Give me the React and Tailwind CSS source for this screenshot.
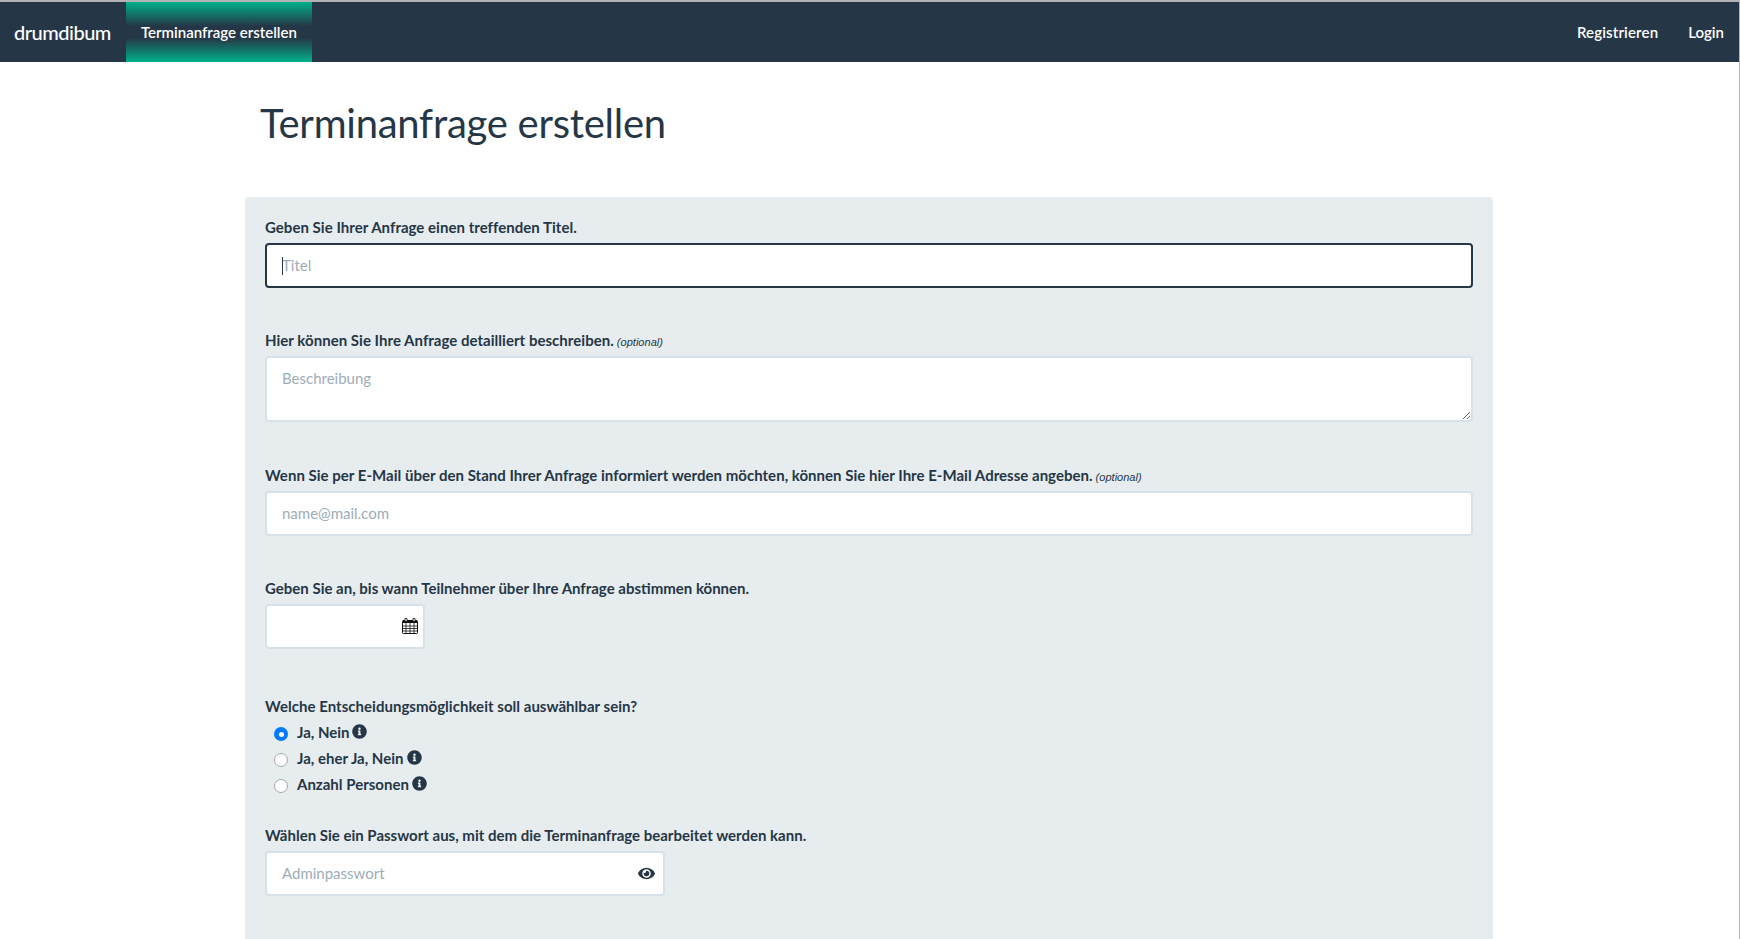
import { FaEye, FaInfoCircle } from "react-icons/fa";

const labelClass = "block text-[15px] font-bold leading-[22px] text-[#253746]";
const inputClass =
  "block h-[45px] w-full rounded-[4px] border-2 border-[#d7e1e9] bg-white px-[15px] pb-[2px] text-[15px] text-[#253746] outline-none placeholder:text-[#9dadb8]";

const decisions = [
  { label: "Ja, Nein", checked: true, gap: "ml-[2px]" },
  { label: "Ja, eher Ja, Nein", checked: false, gap: "ml-[4px]" },
  { label: "Anzahl Personen", checked: false, gap: "ml-[3px]" },
];

function Optional() {
  return <em className="ml-[3px] font-['Liberation_Sans',sans-serif] text-[11px] leading-none font-normal">(optional)</em>;
}

function CalendarIcon() {
  return (
    <svg viewBox="0 0 16 16" className="absolute top-[14px] right-[7px] size-[16px] text-[#111]" fill="none" stroke="currentColor">
      <rect x="0.5" y="2.5" width="15" height="13" rx="1" />
      <rect x="1" y="2" width="14" height="3" fill="currentColor" stroke="none" />
      <path d="M3 0.5h2v3h-2zM11 0.5h2v3h-2z" fill="white" strokeWidth="0.8" />
      <path d="M0.5 8h15M0.5 10.5h15M0.5 13h15M4 5v10M8 5v10M12 5v10" strokeWidth="0.8" />
    </svg>
  );
}

function Radio({ label, checked, gap }) {
  return (
    <label className="flex h-[26px] items-center pl-[9px] text-[15px] font-bold text-[#253746]">
      {checked ? (
        <span className="mt-[2px] flex size-[14px] items-center justify-center rounded-full bg-[#007bff]">
          <span className="size-[5px] rounded-full bg-white" />
        </span>
      ) : (
        <span className="mt-[2px] size-[14px] rounded-full border border-[#a5a9ad] bg-white" />
      )}
      <span className="ml-[9px] mb-[2px]">{label}</span>
      <FaInfoCircle className={`mb-[3px] size-[15px] ${gap}`} />
    </label>
  );
}

export default function App() {
  return (
    <div className="relative h-[939px] overflow-hidden border-t-2 border-r border-[#b4b4b4] bg-white font-['Lato',sans-serif] text-[#253746]">
      <nav className="flex h-[60px] items-center bg-[#253746] text-white">
        <a className="w-[126px] pl-[14px] text-[20px] font-medium tracking-[-0.5px]">drumdibum</a>
        <a className="flex h-full w-[186px] items-center bg-[linear-gradient(to_bottom,#00b08c,#253746_40%,#253746_60%,#00b08c)] px-[15px] text-[15px] font-semibold">
          Terminanfrage erstellen
        </a>
        <div className="ml-auto flex items-center gap-[30px] pr-[15px] text-[15px] font-semibold">
          <a className="tracking-[0.15px]">Registrieren</a>
          <a>Login</a>
        </div>
      </nav>

      <main className="ml-[245px] w-[1248px]">
        <h1 className="pt-[37px] pb-[50px] pl-[15px] text-[40px] leading-[48px] font-normal tracking-[-0.25px]">Terminanfrage erstellen</h1>

        <form className="rounded-[4px] bg-[#e7ecef] px-5 pt-[19px] pb-24">
          <label className={`${labelClass} tracking-[0.03px]`}>Geben Sie Ihrer Anfrage einen treffenden Titel.</label>
          <div className="relative mt-[5px]">
            <input placeholder="Titel" className={`${inputClass} !border-[#253746]`} />
            <span className="absolute top-[14px] left-[17px] h-[18px] w-px bg-[#253746]" />
          </div>

          <label className={`${labelClass} mt-[41px] tracking-[0.03px]`}>
            Hier können Sie Ihre Anfrage detailliert beschreiben.<Optional />
          </label>
          <textarea
            placeholder="Beschreibung"
            className={`${inputClass} mt-[5px] !h-[66px] pt-[9px]`}
          />

          <label className={`${labelClass} mt-[42px] tracking-[0.02px]`}>
            Wenn Sie per E-Mail über den Stand Ihrer Anfrage informiert werden möchten, können Sie hier Ihre E-Mail Adresse angeben.<Optional />
          </label>
          <input placeholder="name@mail.com" className={`${inputClass} mt-[5px]`} />

          <label className={`${labelClass} mt-[41px]`}>Geben Sie an, bis wann Teilnehmer über Ihre Anfrage abstimmen können.</label>
          <div className="relative mt-[5px] w-[160px]">
            <input className={inputClass} />
            <CalendarIcon />
          </div>

          <label className={`${labelClass} mt-[46px] tracking-[0.03px]`}>Welche Entscheidungsmöglichkeit soll auswählbar sein?</label>
          <div className="mt-[3px]">
            {decisions.map((d) => (
              <Radio key={d.label} label={d.label} checked={d.checked} gap={d.gap} />
            ))}
          </div>

          <label className={`${labelClass} mt-[26px]`}>Wählen Sie ein Passwort aus, mit dem die Terminanfrage bearbeitet werden kann.</label>
          <div className="relative mt-[5px] w-[400px]">
            <input placeholder="Adminpasswort" className={inputClass} />
            <FaEye className="absolute top-[14px] right-[10px] size-[17px] text-[#253746]" />
          </div>
        </form>
      </main>
    </div>
  );
}
